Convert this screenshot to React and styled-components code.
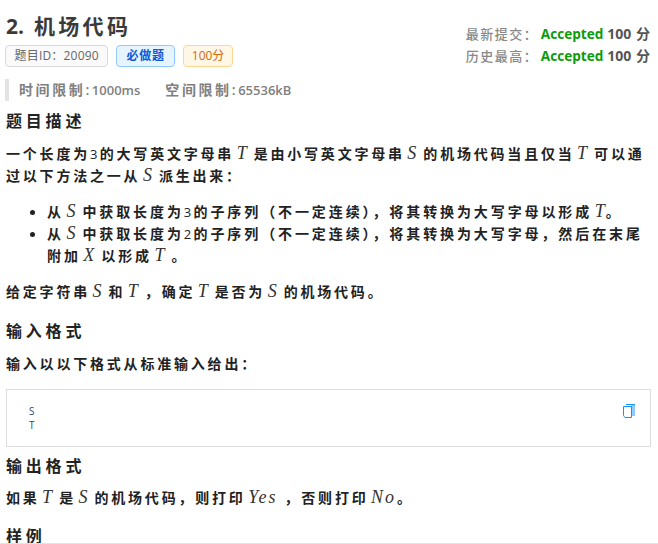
import React from "react";
import styled, { createGlobalStyle } from "styled-components";

const GlobalStyle = createGlobalStyle`
  html, body { margin: 0; padding: 0; background: #fff; overflow: hidden; }
  body { font-family: "Open Sans", "Noto Sans CJK SC", sans-serif; }
`;

const Page = styled.div`
  width: 658px;
  height: 544px;
  overflow: hidden;
  box-sizing: border-box;
  padding: 0 7px 0 6px;
  border-bottom: 1px solid #e4e4e4;
  color: #333;
`;

const Header = styled.div`
  display: flex;
  justify-content: space-between;
  height: 68px;
`;

const Title = styled.h1`
  margin: 13px 0 0;
  font-size: 21px;
  line-height: 27px;
  font-weight: 700;
  letter-spacing: 3.3px;
  color: #3a3a3a;
`;

const TitleNum = styled.span`
  display: inline-block;
  width: 28px;
  letter-spacing: 0;
`;

const Tags = styled.div`
  display: flex;
  gap: 8px;
  margin-top: 5px;
  margin-left: -1px;
`;

const colors = {
  gray: ["#fafafa", "#d9d9d9", "#666"],
  blue: ["#e6f4ff", "#91caff", "#0958d9"],
  orange: ["#fff7e6", "#ffd591", "#d4680f"],
};

const Tag = styled.span`
  height: 20px;
  line-height: 20px;
  padding: 0 ${(p) => p.$pad}px;
  border-radius: 4px;
  font-size: 12px;
  letter-spacing: ${(p) => p.$space}px;
  font-weight: ${(p) => (p.$bold ? 700 : 400)};
  background: ${(p) => colors[p.$color][0]};
  border: 1px solid ${(p) => colors[p.$color][1]};
  color: ${(p) => colors[p.$color][2]};
`;

const Stats = styled.div`
  margin-top: 23px;
  margin-right: 1px;
  display: flex;
  flex-direction: column;
`;

const StatRow = styled.div`
  display: flex;
  justify-content: flex-end;
  height: 22px;
  line-height: 22px;
  font-size: 13px;
`;

const StatLabel = styled.span`
  color: #888;
  letter-spacing: 1.5px;
  font-weight: 500;
  margin-right: 2.5px;
`;

const Accepted = styled.span`
  color: #0a9c0a;
  font-size: 13.6px;
  font-weight: 700;
  margin-right: 4px;
`;

const Score = styled.span`
  color: #555;
  font-size: 14px;
  font-weight: 700;
  word-spacing: 1px;
`;

const Limits = styled.div`
  display: flex;
  gap: 25px;
  height: 22px;
  line-height: 22px;
  margin: 11px 0 0 -1px;
  padding-left: 10px;
  border-left: 4px solid #e3e3e3;
  font-size: 13px;
  font-weight: 600;
  color: #808080;
`;

const LimitLabel = styled.span`
  font-size: 14px;
  letter-spacing: 2.6px;
`;

const SectionTitle = styled.h2`
  margin: ${(p) => p.$top}px 0 0;
  font-size: 16px;
  line-height: 22px;
  font-weight: 700;
  letter-spacing: 3.8px;
  color: #222;
`;

const Para = styled.p`
  margin: ${(p) => p.$top}px 0 0;
  font-size: 14px;
  line-height: 22px;
  font-weight: 700;
  letter-spacing: 2.8px;
  color: #222;
`;

const List = styled.ul`
  margin: 14px 0 0;
  padding: 0 0 0 41px;
  list-style: none;
`;

const Item = styled.li`
  position: relative;
  font-size: 14px;
  line-height: 22px;
  font-weight: 700;
  letter-spacing: 2.9px;
  color: #222;

  &::before {
    content: "";
    position: absolute;
    left: -17px;
    top: 9px;
    width: 5px;
    height: 5px;
    border-radius: 50%;
    background: #222;
  }
`;

const M = styled.i`
  font-family: "Liberation Serif", serif;
  font-size: 18px;
  line-height: 0;
  font-weight: 400;
  color: #333;
  letter-spacing: ${(p) => (p.$wide ? 2 : 0)}px;
  margin: 0 ${(p) => (p.$end ? 1 : 7)}px 0 2.5px;
`;

const Num = styled.span`
  font-size: 13px;
  font-weight: 400;
  letter-spacing: 2.3px;
`;

const CodeBox = styled.div`
  position: relative;
  box-sizing: border-box;
  height: 58px;
  margin-top: 14px;
  padding: 14px 22px;
  border: 1px solid #ddd;
  font-size: 10px;
  line-height: 14px;
  color: #34495e;
`;

const CopyIcon = styled.svg`
  position: absolute;
  top: 14px;
  right: 15px;
  width: 12px;
  height: 14px;
`;

export default function App() {
  return (
    <Page>
      <GlobalStyle />
      <Header>
        <div>
          <Title><TitleNum>2.</TitleNum>机场代码</Title>
          <Tags>
            <Tag $color="gray" $pad={8.5} $space={0.2}>题目ID：20090</Tag>
            <Tag $color="blue" $pad={9} $space={0.8} $bold>必做题</Tag>
            <Tag $color="orange" $pad={8} $space={0}>100分</Tag>
          </Tags>
        </div>
        <Stats>
          <StatRow>
            <StatLabel>最新提交：</StatLabel>
            <Accepted>Accepted</Accepted>
            <Score>100 分</Score>
          </StatRow>
          <StatRow>
            <StatLabel>历史最高：</StatLabel>
            <Accepted>Accepted</Accepted>
            <Score>100 分</Score>
          </StatRow>
        </Stats>
      </Header>

      <Limits>
        <span><LimitLabel>时间限制:</LimitLabel>1000ms</span>
        <span><LimitLabel>空间限制:</LimitLabel>65536kB</span>
      </Limits>

      <SectionTitle $top={9}>题目描述</SectionTitle>
      <Para $top={11}>
        一个长度为<Num>3</Num>的大写英文字母串<M>T</M>是由小写英文字母串<M>S</M>的机场代码当且仅当<M>T</M>可以通过以下方法之一从<M>S</M>派生出来：
      </Para>
      <List>
        <Item>从<M>S</M>中获取长度为<Num>3</Num>的子序列（不一定连续），将其转换为大写字母以形成<M $end>T</M>。</Item>
        <Item>从<M>S</M>中获取长度为<Num>2</Num>的子序列（不一定连续），将其转换为大写字母，然后在末尾附加<M>X</M>以形成<M>T</M>。</Item>
      </List>
      <Para $top={14}>
        给定字符串<M>S</M>和<M>T</M>，确定<M>T</M>是否为<M>S</M>的机场代码。
      </Para>

      <SectionTitle $top={17}>输入格式</SectionTitle>
      <Para $top={11}>输入以以下格式从标准输入给出：</Para>
      <CodeBox>
        S<br />T
        <CopyIcon viewBox="0 0 12 14">
          <path d="M3 .5h9" fill="none" stroke="#1890ff" strokeWidth="1" />
          <rect x="8" y="1" width="4" height="11" fill="#91caff" />
          <path d="M8.5 2.5H.5v9l1.5 2h6.5z" fill="#fff" stroke="#1890ff" strokeWidth="1" />
        </CopyIcon>
      </CodeBox>

      <SectionTitle $top={8}>输出格式</SectionTitle>
      <Para $top={10}>
        如果<M>T</M>是<M>S</M>的机场代码，则打印<M $wide>Yes</M>，否则打印<M $wide $end>No</M>。
      </Para>
      <SectionTitle $top={16}>样例</SectionTitle>
    </Page>
  );
}
